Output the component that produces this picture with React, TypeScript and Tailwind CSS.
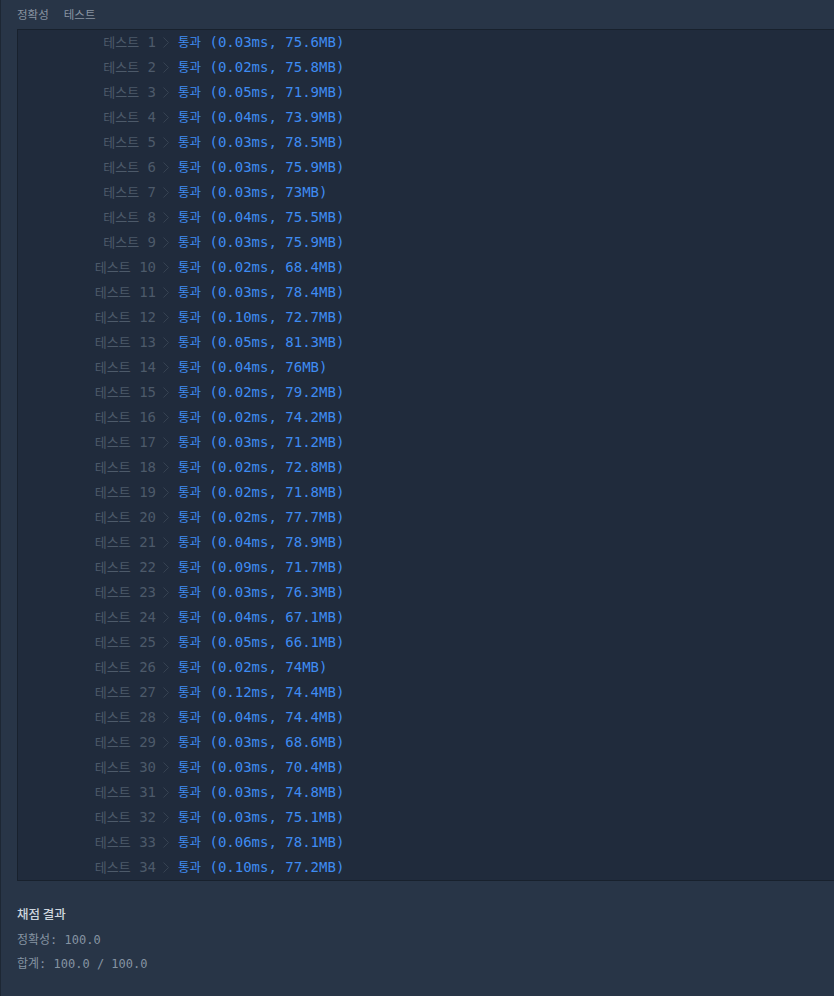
const results: [string, string][] = [
  ["0.03", "75.6"], ["0.02", "75.8"], ["0.05", "71.9"], ["0.04", "73.9"], ["0.03", "78.5"],
  ["0.03", "75.9"], ["0.03", "73"], ["0.04", "75.5"], ["0.03", "75.9"], ["0.02", "68.4"],
  ["0.03", "78.4"], ["0.10", "72.7"], ["0.05", "81.3"], ["0.04", "76"], ["0.02", "79.2"],
  ["0.02", "74.2"], ["0.03", "71.2"], ["0.02", "72.8"], ["0.02", "71.8"], ["0.02", "77.7"],
  ["0.04", "78.9"], ["0.09", "71.7"], ["0.03", "76.3"], ["0.04", "67.1"], ["0.05", "66.1"],
  ["0.02", "74"], ["0.12", "74.4"], ["0.04", "74.4"], ["0.03", "68.6"], ["0.03", "70.4"],
  ["0.03", "74.8"], ["0.03", "75.1"], ["0.06", "78.1"], ["0.10", "77.2"],
];

const mono = "font-['DejaVu_Sans_Mono','Noto_Sans_CJK_KR',monospace]";

function Chevron() {
  return (
    <svg width="6" height="11" viewBox="0 0 6 11" fill="none">
      <path d="M0.5 0.5 L5.5 5.5 L0.5 10.5" stroke="#364252" strokeWidth="1" />
    </svg>
  );
}

export default function App() {
  return (
    <div className="min-h-[996px] w-[834px] overflow-hidden bg-[#283547] border-l border-[#1d2734] font-['Noto_Sans_CJK_KR',sans-serif]">
      <div className="flex h-[29px] items-center gap-[15px] pl-[16px] text-[11.5px] text-[#8893a1]">
        <span>정확성</span>
        <span>테스트</span>
      </div>
      <div className={`ml-[16px] w-[830px] border border-r-0 border-[#18212d] bg-[#202b3c] ${mono} text-[14px]`}>
        {results.map(([t, m], i) => (
          <div key={i} className="flex h-[25px] items-center">
            <span className="w-[138px] text-right text-[#4d5a6a]">
              <span className="text-[13px]">테스트</span> {i + 1}
            </span>
            <span className="flex w-[22px] items-center pl-[7px]">
              <Chevron />
            </span>
            <span className="text-[#3f8cf2]">
              <span className="text-[12.5px]">통과</span> ({t}ms, {m}MB)
            </span>
          </div>
        ))}
      </div>
      <div className="px-[16px] pt-[24px]">
        <div className="text-[12.5px] font-medium text-[#cdd5de]">채점 결과</div>
        <div className={`mt-[4px] text-[12px] leading-[24px] text-[#8593a2] ${mono}`}>
          <div>정확성: 100.0</div>
          <div>합계: 100.0 / 100.0</div>
        </div>
      </div>
    </div>
  );
}
